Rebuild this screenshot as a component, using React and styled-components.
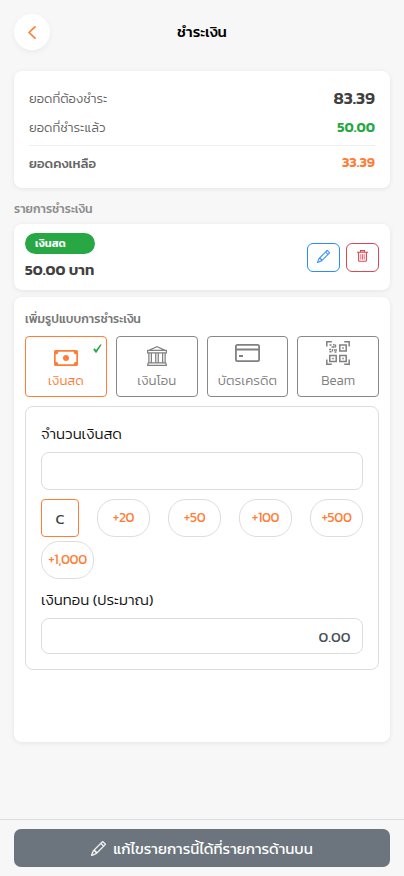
import React, { useState } from "react";
import styled, { createGlobalStyle } from "styled-components";
import { BsPencil, BsBank } from "react-icons/bs";

const CashIcon = () => (
  <svg width="24" height="16" viewBox="0 0 24 16" fill="currentColor">
    <path
      fillRule="evenodd"
      d="M1.500 0h21a1.500 1.500 0 0 1 1.500 1.500v13a1.500 1.500 0 0 1-1.500 1.500h-21a1.500 1.500 0 0 1-1.500-1.500v-13a1.500 1.500 0 0 1 1.500-1.500zM4.300 1.700a2.600 2.600 0 0 1-2.600 2.600v7.400a2.600 2.600 0 0 1 2.600 2.600h15.400a2.600 2.600 0 0 1 2.600-2.600v-7.400a2.600 2.600 0 0 1-2.600-2.600z"
    />
    <circle cx="12" cy="8" r="3" />
  </svg>
);

const CardIcon = () => (
  <svg width="25" height="18" viewBox="0 0 25 18" fill="none" stroke="currentColor" strokeWidth="1.8">
    <rect x="0.900" y="0.900" width="23.200" height="16.200" rx="1.600" />
    <path d="M1 5.500h23M4 12h4" strokeWidth="2.200" />
  </svg>
);

const QrIcon = () => (
  <svg width="24" height="24" viewBox="0 0 24 24" fill="none" stroke="currentColor" strokeWidth="1.5">
    <path d="M.8 5.500V.8h5M18.200.8h5v4.700M23.200 18.500v4.700h-5M5.800 23.200h-5v-4.700" />
    <path d="M13.800 4h6.400v6h-6.400zM3.800 14.500h6.400v6h-6.400zM13.800 14.500h6.400v6h-6.400z" />
    <path d="M16.200 7h1.600M6.200 17.500h1.600M16.200 17.500h1.600" strokeWidth="1.600" />
    <path d="M3.500 4h2M7 3.800h1.500M9.500 3.500v3M5.500 6h3M3 8.500h2M6.500 8v2.500M8 9h3M3.500 10.800h2M8.500 11h2" strokeWidth="1.400" />
  </svg>
);

const TrashIcon = () => (
  <svg width="11" height="12" viewBox="0 0 11 12" fill="none" stroke="currentColor">
    <path d="M0 2.300h11M3.500 2V.6h4V2M1.600 2.500v8a.8.8 0 0 0 .8.800h6.200a.8.8 0 0 0 .8-.8v-8" strokeWidth="1.100" />
    <path d="M3.800 4.200v5.400M5.500 4.200v5.400M7.200 4.200v5.400" strokeWidth="0.800" />
  </svg>
);

const CheckIcon = () => (
  <svg width="9" height="9" viewBox="0 0 9 9" fill="currentColor">
    <path d="M0.200 5.400 1.700 4.300 3.100 5.900 7.400 0.200 8.600 0.700 3.500 8.800 2.600 8.800z" />
  </svg>
);

const methods = [
  { id: "cash", label: "เงินสด", icon: <CashIcon />, top: 13 },
  { id: "transfer", label: "เงินโอน", icon: <BsBank size={20} />, top: 9 },
  { id: "credit", label: "บัตรเครดิต", icon: <CardIcon />, top: 7 },
  { id: "beam", label: "Beam", icon: <QrIcon />, top: 4 },
];

const amounts = [20, 50, 100, 500, 1000];

const App = () => {
  const [method, setMethod] = useState("cash");
  const [cash, setCash] = useState(0);

  return (
    <Page>
      <GlobalStyle />
      <Header>
        <BackButton aria-label="back">
          <svg width="8" height="13" viewBox="0 0 8 13" fill="none" stroke="currentColor" strokeWidth="1.7" strokeLinecap="round" strokeLinejoin="round">
            <path d="M7 0.900 1 6.500l6 5.600" />
          </svg>
        </BackButton>
        <Title>ชำระเงิน</Title>
      </Header>

      <Summary>
        <SummaryRow $h={29}>
          <span>ยอดที่ต้องชำระ</span>
          <Amount $size={17} $color="#404040">83.39</Amount>
        </SummaryRow>
        <SummaryRow $h={29}>
          <span>ยอดที่ชำระแล้ว</span>
          <Amount $size={14} $color="#28a745">50.00</Amount>
        </SummaryRow>
        <SummaryRow $h={34} $total>
          <span>ยอดคงเหลือ</span>
          <Amount $size={14} $color="#ff7e37">33.39</Amount>
        </SummaryRow>
      </Summary>

      <SectionTitle>รายการชำระเงิน</SectionTitle>
      <PaidCard>
        <PaidInfo>
          <Badge>เงินสด</Badge>
          <PaidAmount>50.00 บาท</PaidAmount>
        </PaidInfo>
        <Actions>
          <ActionButton $color="#2a8cff"><BsPencil size={13} strokeWidth={0.3} /></ActionButton>
          <ActionButton $color="#dc4655"><TrashIcon /></ActionButton>
        </Actions>
      </PaidCard>

      <MethodCard>
        <MethodTitle>เพิ่มรูปแบบการชำระเงิน</MethodTitle>
        <MethodGrid>
          {methods.map((m) => (
            <Method key={m.id} $active={m.id === method} onClick={() => setMethod(m.id)}>
              <MethodIcon $top={m.top}>{m.icon}</MethodIcon>
              <MethodLabel>{m.label}</MethodLabel>
              {m.id === method && <Check><CheckIcon /></Check>}
            </Method>
          ))}
        </MethodGrid>

        <CashBox>
          <Label>จำนวนเงินสด</Label>
          <Field $h={38}>{cash > 0 ? cash.toFixed(2) : ""}</Field>
          <Chips>
            <ClearButton onClick={() => setCash(0)}>C</ClearButton>
            {amounts.map((a) => (
              <Chip key={a} onClick={() => setCash(cash + a)}>+{a.toLocaleString("en-US")}</Chip>
            ))}
          </Chips>
          <Label>เงินทอน (ประมาณ)</Label>
          <Field $h={36}>0.00</Field>
        </CashBox>
      </MethodCard>

      <Footer>
        <FooterButton>
          <BsPencil size={15} strokeWidth={0.4} />
          <span>แก้ไขรายการนี้ได้ที่รายการด้านบน</span>
        </FooterButton>
      </Footer>
    </Page>
  );
};

const GlobalStyle = createGlobalStyle`
  * {
    box-sizing: border-box;
  }
  body {
    margin: 0;
    background: #f7f7f7;
  }
  body, button {
    font-family: Kanit, "Noto Sans Thai", Inter, "Noto Sans", sans-serif;
  }
  button {
    padding: 0;
    cursor: pointer;
  }
  svg {
    display: block;
    flex-shrink: 0;
  }
`;

const Page = styled.main`
  display: flex;
  flex-direction: column;
  height: 876px;
  overflow: hidden;
  white-space: nowrap;
`;

const Header = styled.header`
  display: grid;
  grid-template-columns: 36px 1fr 36px;
  align-items: center;
  height: 71px;
  padding: 14px 14px 21px;
`;

const BackButton = styled.button`
  display: flex;
  align-items: center;
  justify-content: center;
  width: 36px;
  height: 36px;
  border: none;
  border-radius: 50%;
  background: #fff;
  color: #ff7e37;
  box-shadow: 0 2px 6px rgba(0, 0, 0, 0.05);
`;

const Title = styled.h1`
  margin: 0;
  text-align: center;
  font-size: 15px;
  line-height: 20px;
  padding-bottom: 1px;
  font-weight: 500;
  color: #000;
`;

const Card = styled.section`
  margin: 0 14px;
  border-radius: 8px;
  background: #fff;
  box-shadow: 0 1px 5px rgba(0, 0, 0, 0.08);
`;

const Summary = styled(Card)`
  height: 117px;
  padding: 13px 15px;
`;

const SummaryRow = styled.div`
  display: flex;
  align-items: center;
  justify-content: space-between;
  height: ${(p) => p.$h}px;
  font-size: ${(p) => (p.$total ? 13.200 : 13.100)}px;
  color: #666;
  font-weight: ${(p) => (p.$total ? 500 : 300)};
  ${(p) => p.$total && "margin-top: 3px; border-top: 1px solid #eee;"}
`;

const Amount = styled.strong`
  font-size: ${(p) => p.$size}px;
  line-height: 20px;
  padding-bottom: ${(p) => (p.$size > 16 ? 2 : 0)}px;
  color: ${(p) => p.$color};
  font-weight: 600;
`;

const SectionTitle = styled.h2`
  height: 36px;
  margin: 0 14px;
  padding-top: 5px;
  line-height: 32px;
  font-size: 12.200px;
  font-weight: 500;
  color: #8c8c8c;
`;

const PaidCard = styled(Card)`
  display: flex;
  justify-content: space-between;
  align-items: center;
  height: 66px;
  padding: 0 11px;
`;

const PaidInfo = styled.div`
  display: flex;
  flex-direction: column;
  gap: 5px;
`;

const Badge = styled.span`
  width: 70px;
  height: 21px;
  padding-left: 10px;
  border-radius: 11px;
  background: #28a745;
  color: #fff;
  font-size: 11px;
  font-weight: 600;
  line-height: 21px;
`;

const PaidAmount = styled.strong`
  font-size: 15px;
  line-height: 22px;
  font-weight: 600;
  color: #404040;
`;

const Actions = styled.div`
  display: flex;
  gap: 6px;
`;

const ActionButton = styled.button`
  display: flex;
  align-items: center;
  justify-content: center;
  width: 33px;
  height: 29px;
  padding-bottom: 2px;
  border: 1px solid ${(p) => p.$color};
  border-radius: 6px;
  background: #fff;
  color: ${(p) => p.$color};
`;

const MethodCard = styled(Card)`
  height: 445px;
  margin-top: 7px;
  padding: 11px 11px 0;
`;

const MethodTitle = styled.h2`
  margin: 0;
  height: 28px;
  line-height: 22px;
  font-size: 12.200px;
  font-weight: 500;
  color: #777;
`;

const MethodGrid = styled.div`
  display: grid;
  grid-template-columns: repeat(4, 1fr);
  gap: 9px;
`;

const Method = styled.button`
  position: relative;
  display: flex;
  flex-direction: column;
  align-items: center;
  height: 61px;
  border: 1px solid ${(p) => (p.$active ? "#ff7e37" : "#888")};
  border-radius: 4px;
  background: #fff;
  color: ${(p) => (p.$active ? "#ff7e37" : "#808080")};
`;

const MethodIcon = styled.span`
  height: 33px;
  padding-top: ${(p) => p.$top}px;
`;

const MethodLabel = styled.span`
  line-height: 21px;
  font-size: 13.300px;
  font-weight: 300;
`;

const Check = styled.span`
  position: absolute;
  top: 7px;
  right: 4px;
  color: #28a745;
`;

const CashBox = styled.div`
  height: 264px;
  margin-top: 9px;
  padding: 13px 15px;
  border: 1px solid #ddd;
  border-radius: 8px;
`;

const Label = styled.div`
  height: 32px;
  line-height: 27px;
  font-size: 15px;
  font-weight: 300;
  color: #111;
`;

const Field = styled.div`
  display: flex;
  align-items: center;
  justify-content: flex-end;
  height: ${(p) => p.$h}px;
  padding: 0 11.500px;
  border: 1px solid #ddd;
  border-radius: 8px;
  font-size: 15px;
  color: #495057;
`;

const Chips = styled.div`
  display: flex;
  flex-wrap: wrap;
  justify-content: space-between;
  gap: 4px 10px;
  padding: 9px 0 7px;
`;

const Chip = styled.button`
  width: 53px;
  height: 38px;
  padding-bottom: 2px;
  border: 1px solid #ddd;
  border-radius: 18px;
  background: #fff;
  color: #ff7e37;
  font-size: 13.800px;
  font-weight: 400;
  letter-spacing: -0.350px;
`;

const ClearButton = styled(Chip)`
  width: 38px;
  padding: 1px 0 0;
  border-color: #ff7e37;
  border-radius: 4px;
  color: #404040;
  font-size: 15px;
  letter-spacing: 0;
`;

const Footer = styled.footer`
  margin-top: auto;
  height: 57px;
  padding: 9px 14px;
  border-top: 1px solid #ddd;
`;

const FooterButton = styled.button`
  display: flex;
  align-items: center;
  justify-content: center;
  gap: 7px;
  width: 100%;
  height: 38px;
  border: none;
  border-radius: 7px;
  background: #6c757d;
  color: #fff;
  font-size: 15px;
  font-weight: 400;
`;

export default App;
